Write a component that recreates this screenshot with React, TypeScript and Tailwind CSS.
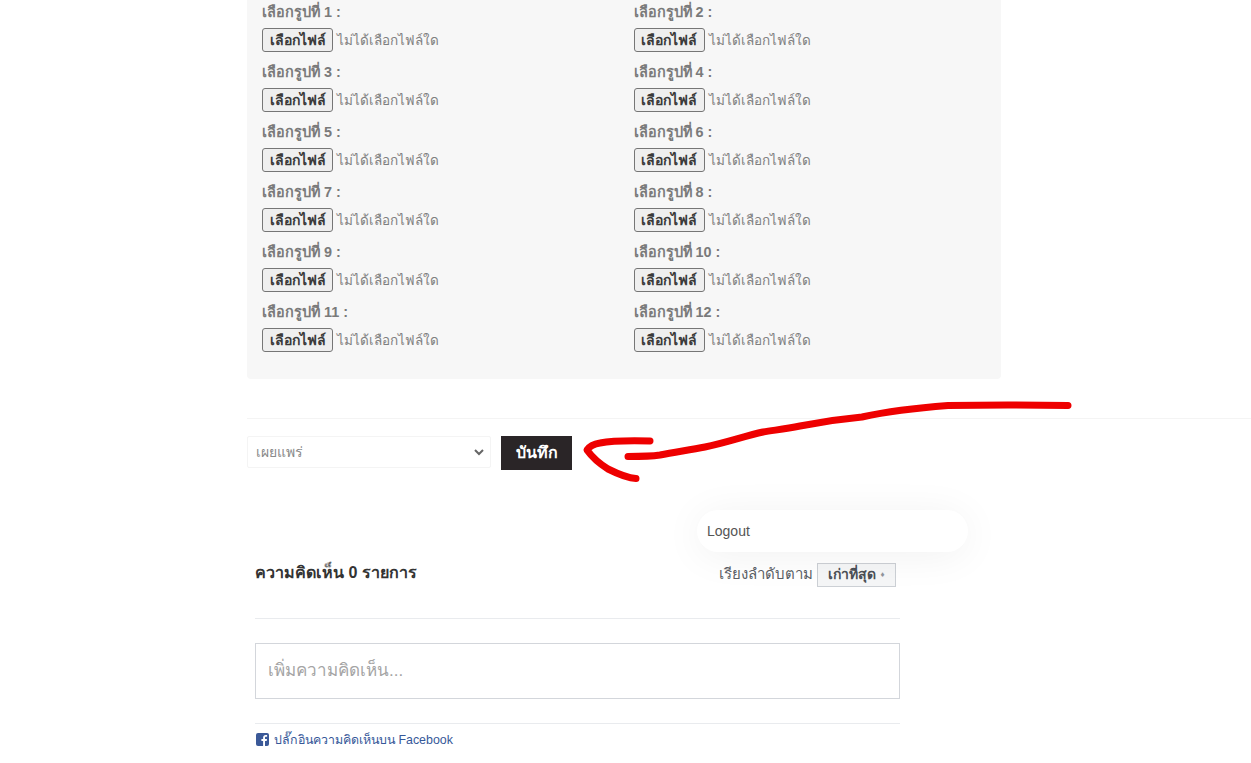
const FONT = "font-['Liberation_Sans','Noto_Sans','DejaVu_Sans',sans-serif]";

function Field({ n }: { n: number }) {
  return (
    <div className="h-[60px]">
      <div className="h-[24px] text-[14.4px] leading-[25px] font-bold text-[#7a7a7a]">เลือกรูปที่ {n} :</div>
      <div className="mt-[4px] flex h-[24px] items-center">
        <span className="flex h-[24px] w-[71px] items-center justify-center rounded-[3px] border border-[#767676] bg-[#efefef] text-[14px] font-bold text-[#3a3a3a]">
          เลือกไฟล์
        </span>
        <span className="ml-[4px] pt-[2px] text-[13.5px] text-[#808080]">ไม่ได้เลือกไฟล์ใด</span>
      </div>
    </div>
  );
}

export default function App() {
  return (
    <div className={`${FONT} relative h-[763px] w-[1251px] overflow-hidden bg-white`}>
      <div className="ml-[247px] h-[379px] w-[754px] rounded-b-[4px] bg-[#f7f7f7] pl-[15px]">
        <div className="grid grid-cols-[371.5px_1fr]">
          {Array.from({ length: 12 }, (_, i) => (
            <Field key={i} n={i + 1} />
          ))}
        </div>
      </div>

      <div className="ml-[247px] mt-[39px] border-t border-[#f4f4f4] pt-[17px]">
        <div className="flex items-start">
          <div className="flex h-[32px] w-[244px] items-center justify-between rounded-[2px] border border-[#f4f4f4] bg-white pl-[8px] pr-[5px] text-[14px] text-[#8a8a8a]">
            <span>เผยแพร่</span>
            <svg width="12" height="12" viewBox="0 0 12 12" fill="none" stroke="#666666" strokeWidth="2">
              <path d="M2 4l4 4 4-4" />
            </svg>
          </div>
          <div className="ml-[10px] flex h-[34px] w-[71px] items-center justify-center bg-[#2a2527] text-[16px] font-bold text-white">
            บันทึก
          </div>
        </div>
      </div>

      <div className="ml-[255px] mt-[86px] w-[645px]">
        <div className="flex h-[33px] items-center justify-between pr-[4px]">
          <span className="text-[16.100px] font-bold text-[#333333]">ความคิดเห็น 0 รายการ</span>
          <div className="mt-[4px] flex items-center">
            <span className="text-[15px] text-[#5b5f66]">เรียงลำดับตาม</span>
            <span className="ml-[4px] flex h-[24px] w-[79px] items-center justify-center gap-[4px] border border-[#ccd0d5] bg-[#f5f6f7] text-[14px] font-bold text-[#4b4f56]">
              เก่าที่สุด <span className="text-[8px] text-[#90949c]">♦</span>
            </span>
          </div>
        </div>
        <div className="mt-[29px] border-t border-[#e9ebee] pt-[24px]">
          <div className="flex h-[56px] items-center border border-[#d3d6db] bg-white pl-[12px] text-[17px] text-[#a5a5a5]">
            เพิ่มความคิดเห็น...
          </div>
        </div>
        <div className="mt-[24px] flex items-center border-t border-[#e9ebee] pt-[8px]">
          <svg width="13" height="13" viewBox="0 0 13 13" className="ml-[1px] -mt-[2px]">
            <rect width="13" height="13" rx="2" fill="#3b5998" />
            <path d="M9 13V8h1.7l.3-2H9V4.8c0-.6.2-1 1-1h1.100V2.100C10.800 2 10.300 2 9.700 2 8.200 2 7.100 2.900 7.100 4.600V6H5.400v2h1.700v5z" fill="#fff" />
          </svg>
          <span className="ml-[5px] text-[12.400px] leading-[17px] text-[#365899]">ปลั๊กอินความคิดเห็นบน Facebook</span>
        </div>
      </div>

      <div className="absolute left-[697px] top-[510px] flex h-[42px] w-[271px] items-center rounded-[21px] bg-white pl-[10px] text-[14px] text-[#555555] shadow-[0_4px_40px_rgba(0,0,0,0.06)]">
        Logout
      </div>

      <svg className="pointer-events-none absolute left-0 top-0" width="1251" height="763" viewBox="0 0 1251 763" fill="none">
        <path
          d="M1068 405.500C1030 405 985 405 948 405.500C915 408 885 412 862 417C840 419 815 423 800 426C785 429 775 430 763 432C745 436 725 443 705 447C690 450 675 452 660 455C650 456.500 640 456.500 628 456.500"
          stroke="#ee0000"
          strokeWidth="7"
          strokeLinecap="round"
          strokeLinejoin="round"
        />
        <path
          d="M650 441C630 440.500 610 441 600 443C594 444 589 447 587 450C592 457 600 464 608 469C616 473 626 478 636 478.500"
          stroke="#ee0000"
          strokeWidth="7"
          strokeLinecap="round"
          strokeLinejoin="round"
        />
      </svg>
    </div>
  );
}
